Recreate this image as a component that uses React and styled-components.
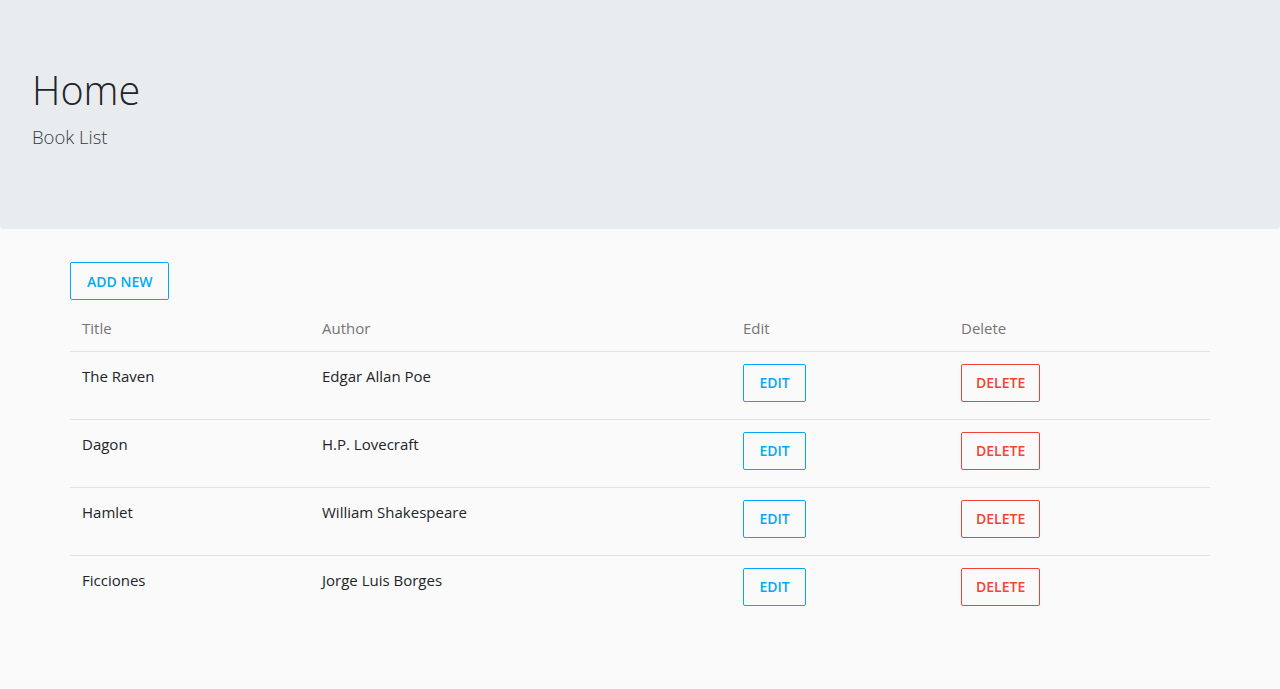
import React from "react";
import styled, { createGlobalStyle } from "styled-components";

const GlobalStyle = createGlobalStyle`
  html, body { margin: 0; padding: 0; }
  body {
    background: #fafafa;
    font-family: "Open Sans", "Noto Sans", "Liberation Sans", sans-serif;
    color: #212529;
    font-size: 16px;
    line-height: 1.5;
  }
  * { box-sizing: border-box; }
`;

const Jumbotron = styled.header`
  background: #e9ecef;
  padding: 66px 32px 0;
  height: 229px;
  border-radius: 0 0 4px 4px;
`;

const Title = styled.h1`
  margin: 0 0 8px;
  font-size: 39.5px;
  font-weight: 300;
  line-height: 48px;
  color: #212529;
`;

const Lead = styled.p`
  margin: 0;
  font-size: 18.5px;
  font-weight: 300;
  line-height: 30px;
  color: #343a40;
`;

const Container = styled.main`
  width: 1140px;
  margin: 33px auto 0;
`;

const Button = styled.button`
  display: inline-flex;
  align-items: center;
  justify-content: center;
  height: 38px;
  padding: 0 ${(p) => p.$px || 16}px;
  background: transparent;
  border: 1px solid ${(p) => (p.$danger ? "#f44336" : "#03a9f4")};
  color: ${(p) => (p.$danger ? "#f44336" : "#03a9f4")};
  border-radius: 2px;
  font-family: inherit;
  font-size: 14px;
  font-weight: 600;
  text-transform: uppercase;
  cursor: pointer;
`;

const Table = styled.table`
  width: 100%;
  margin-top: 5px;
  border-collapse: collapse;
`;

const Th = styled.th`
  text-align: left;
  font-weight: 400;
  color: #757575;
  padding: 12px 12px 11px;
  font-size: 15px;
  border-bottom: 1px solid #e3e3e3;
  width: ${(p) => p.$w}px;
`;

const Td = styled.td`
  padding: 12px;
  height: 68px;
  vertical-align: top;
  font-size: 15px;
  line-height: 24px;
  color: #212529;
  border-bottom: ${(p) => (p.$last ? "none" : "1px solid #e3e3e3")};
`;

const books = [
  { title: "The Raven", author: "Edgar Allan Poe" },
  { title: "Dagon", author: "H.P. Lovecraft" },
  { title: "Hamlet", author: "William Shakespeare" },
  { title: "Ficciones", author: "Jorge Luis Borges" },
];

export default function App() {
  return (
    <>
      <GlobalStyle />
      <Jumbotron>
        <Title>Home</Title>
        <Lead>Book List</Lead>
      </Jumbotron>
      <Container>
        <Button>Add New</Button>
        <Table>
          <thead>
            <tr>
              <Th $w={240}>Title</Th>
              <Th $w={421}>Author</Th>
              <Th $w={218}>Edit</Th>
              <Th $w={261}>Delete</Th>
            </tr>
          </thead>
          <tbody>
            {books.map((b, i) => {
              const last = i === books.length - 1;
              return (
                <tr key={b.title}>
                  <Td $last={last}>{b.title}</Td>
                  <Td $last={last}>{b.author}</Td>
                  <Td $last={last}>
                    <Button $px={15.5}>Edit</Button>
                  </Td>
                  <Td $last={last}>
                    <Button $px={14} $danger>
                      Delete
                    </Button>
                  </Td>
                </tr>
              );
            })}
          </tbody>
        </Table>
      </Container>
    </>
  );
}
